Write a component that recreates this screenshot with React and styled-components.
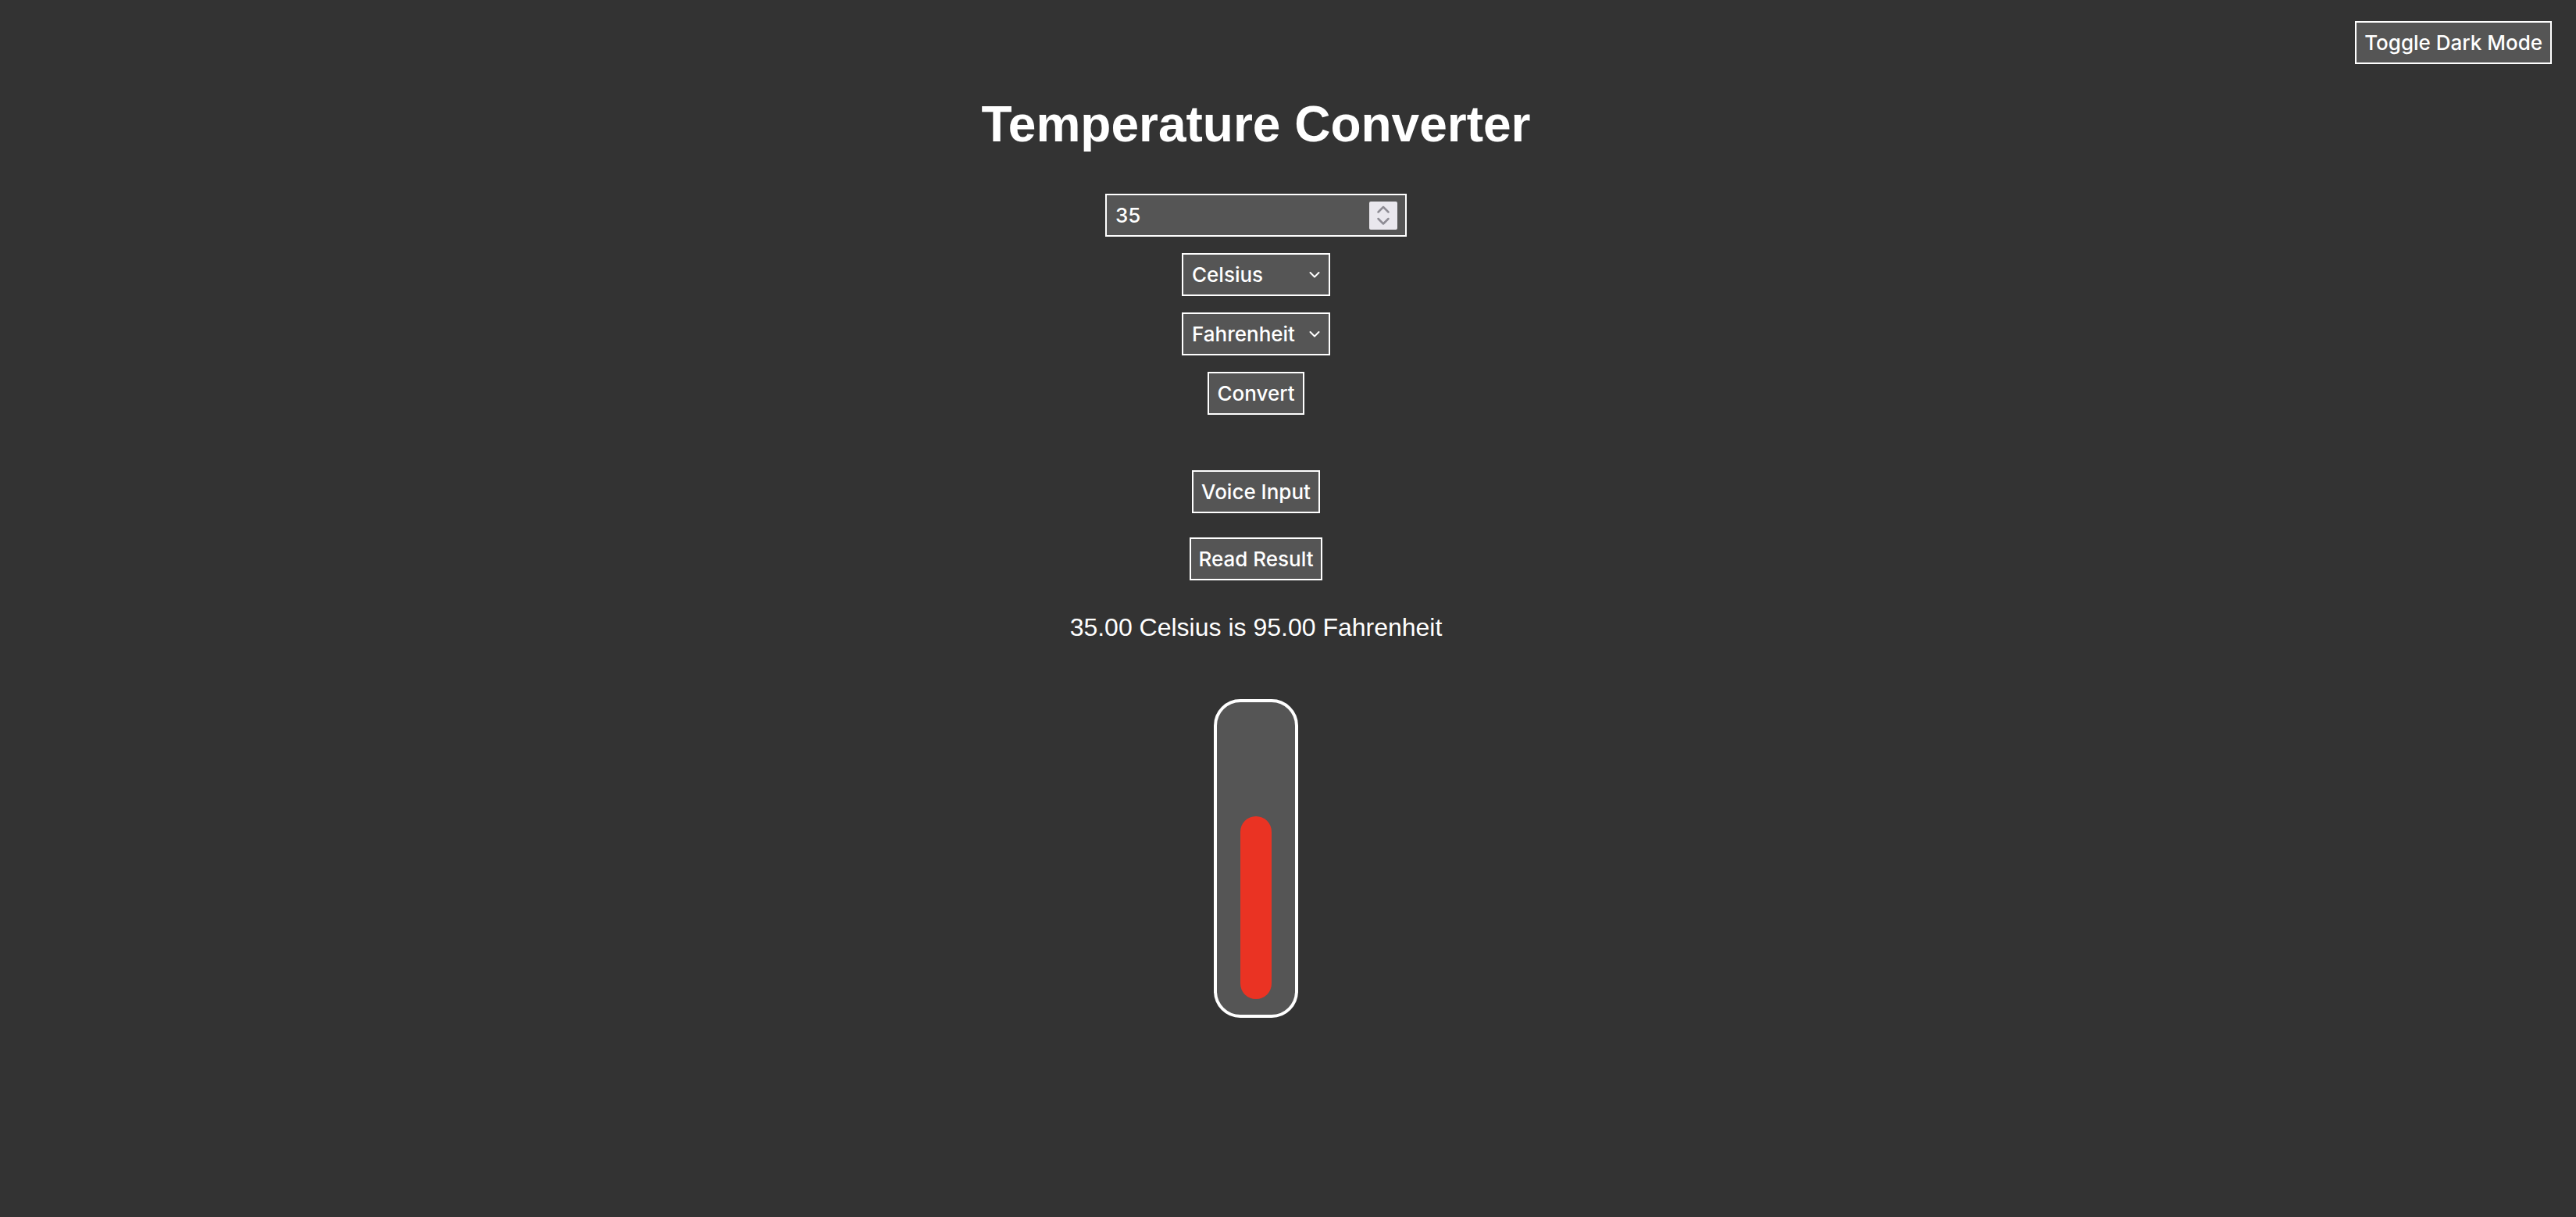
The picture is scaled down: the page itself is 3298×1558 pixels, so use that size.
import React, { useState } from 'react'
import styled, { createGlobalStyle } from 'styled-components'

const GlobalStyle = createGlobalStyle`
  html, body {
    margin: 0;
    padding: 0;
    background: ${p => (p.$dark ? '#333333' : '#f4f4f4')};
  }
  body {
    font-family: "Liberation Sans", Arial, sans-serif;
    min-height: 100vh;
  }
`

const Page = styled.div`
  min-height: 100vh;
  background: ${p => (p.$dark ? '#333333' : '#f4f4f4')};
  color: ${p => (p.$dark ? '#ffffff' : '#222222')};
`

const TopBar = styled.header`
  display: flex;
  justify-content: flex-end;
  padding: 27px 31px 0 0;
`

const Main = styled.main`
  display: flex;
  flex-direction: column;
  align-items: center;
  padding: 40px 82px 80px 0;
`

const Title = styled.h1`
  margin: 0;
  font-family: "Liberation Sans", Arial, sans-serif;
  font-weight: 700;
  font-size: 64px;
  line-height: 74px;
`

const Button = styled.button`
  box-sizing: border-box;
  height: 55px;
  margin-top: ${p => p.$gap || 0}px;
  padding: 0 10px;
  background: #555555;
  color: #ffffff;
  border: 2px solid #ffffff;
  border-radius: 0;
  font-family: Inter, "Noto Sans", sans-serif;
  font-size: 26px;
  font-weight: 500;
  cursor: pointer;
`

const NumberField = styled.div`
  box-sizing: border-box;
  display: flex;
  align-items: center;
  width: 386px;
  height: 55px;
  margin-top: 52px;
  padding: 0 10px 0 11px;
  background: #555555;
  border: 2px solid #ffffff;
`

const NumberInput = styled.input`
  flex: 1;
  min-width: 0;
  padding: 0;
  border: none;
  outline: none;
  background: transparent;
  color: #ffffff;
  font-family: Inter, "Noto Sans", sans-serif;
  font-size: 26px;
  font-weight: 500;
`

const Spinner = styled.div`
  display: flex;
  width: 36px;
  height: 36px;
  background: #e9e7ed;
  border-radius: 2px;
  cursor: pointer;
`

const SelectBox = styled.div`
  position: relative;
  width: 190px;
  height: 55px;
  margin-top: 21px;
`

const Select = styled.select`
  box-sizing: border-box;
  width: 100%;
  height: 100%;
  padding: 0 30px 0 11px;
  appearance: none;
  -webkit-appearance: none;
  background: #555555;
  color: #ffffff;
  border: 2px solid #ffffff;
  border-radius: 0;
  outline: none;
  font-family: Inter, "Noto Sans", sans-serif;
  font-size: 26px;
  font-weight: 500;
`

const Chevron = styled.svg`
  position: absolute;
  right: 13px;
  top: 50%;
  transform: translateY(-50%);
  pointer-events: none;
`

const Result = styled.p`
  margin: 42px 0 0;
  font-family: "Liberation Sans", Arial, sans-serif;
  font-size: 32px;
  line-height: 37px;
`

const Thermometer = styled.div`
  box-sizing: border-box;
  display: flex;
  flex-direction: column;
  justify-content: flex-end;
  align-items: center;
  width: 108px;
  height: 408px;
  margin-top: 73px;
  padding-bottom: 20px;
  background: #555555;
  border: 4px solid #ffffff;
  border-radius: 34px;
`

const Mercury = styled.div`
  width: 40px;
  border-radius: 20px;
  background: #ea3323;
`

const UNITS = ['Celsius', 'Fahrenheit', 'Kelvin']

function toCelsius(v, unit) {
  if (unit === 'Fahrenheit') return (v - 32) * 5 / 9
  if (unit === 'Kelvin') return v - 273.15
  return v
}

function fromCelsius(c, unit) {
  if (unit === 'Fahrenheit') return c * 9 / 5 + 32
  if (unit === 'Kelvin') return c + 273.15
  return c
}

function UnitSelect({ value, onChange }) {
  return (
    <SelectBox>
      <Select value={value} onChange={e => onChange(e.target.value)}>
        {UNITS.map(u => <option key={u} value={u}>{u}</option>)}
      </Select>
      <Chevron width="14" height="9" viewBox="0 0 14 9">
        <polyline points="1.5,1.5 7,7 12.5,1.5" fill="none" stroke="#ffffff" strokeWidth="2" strokeLinecap="round" strokeLinejoin="round" />
      </Chevron>
    </SelectBox>
  )
}

export default function App() {
  const [dark, setDark] = useState(true)
  const [value, setValue] = useState('35')
  const [from, setFrom] = useState('Celsius')
  const [to, setTo] = useState('Fahrenheit')
  const [result, setResult] = useState({ v: 35, from: 'Celsius', out: 95, to: 'Fahrenheit' })

  const convert = () => {
    const v = parseFloat(value) || 0
    setResult({ v, from, out: fromCelsius(toCelsius(v, from), to), to })
  }

  const step = d => setValue(String((parseFloat(value) || 0) + d))

  // mercury height follows the last converted temperature
  const celsius = toCelsius(result.v, result.from)
  const fill = Math.max(20, Math.min(344, celsius * (234 / 35)))
  const text = `${result.v.toFixed(2)} ${result.from} is ${result.out.toFixed(2)} ${result.to}`

  const speak = () => {
    if (window.speechSynthesis) window.speechSynthesis.speak(new SpeechSynthesisUtterance(text))
  }

  return (
    <Page $dark={dark}>
      <GlobalStyle $dark={dark} />
      <TopBar>
        <Button onClick={() => setDark(!dark)}>Toggle Dark Mode</Button>
      </TopBar>
      <Main>
        <Title>Temperature Converter</Title>
        <NumberField>
          <NumberInput value={value} onChange={e => setValue(e.target.value)} />
          <Spinner>
            <svg width="36" height="36" viewBox="0 0 36 36">
              <polyline points="11.5,13.5 18,7 24.5,13.5" fill="none" stroke="#8e8c94" strokeWidth="2.5" strokeLinecap="round" strokeLinejoin="round" onClick={() => step(1)} />
              <polyline points="11.5,22 18,28.5 24.5,22" fill="none" stroke="#8e8c94" strokeWidth="2.5" strokeLinecap="round" strokeLinejoin="round" onClick={() => step(-1)} />
            </svg>
          </Spinner>
        </NumberField>
        <UnitSelect value={from} onChange={setFrom} />
        <UnitSelect value={to} onChange={setTo} />
        <Button $gap={21} onClick={convert}>Convert</Button>
        <Button $gap={71}>Voice Input</Button>
        <Button $gap={31} onClick={speak}>Read Result</Button>
        <Result>{text}</Result>
        <Thermometer>
          <Mercury style={{ height: fill }} />
        </Thermometer>
      </Main>
    </Page>
  )
}
